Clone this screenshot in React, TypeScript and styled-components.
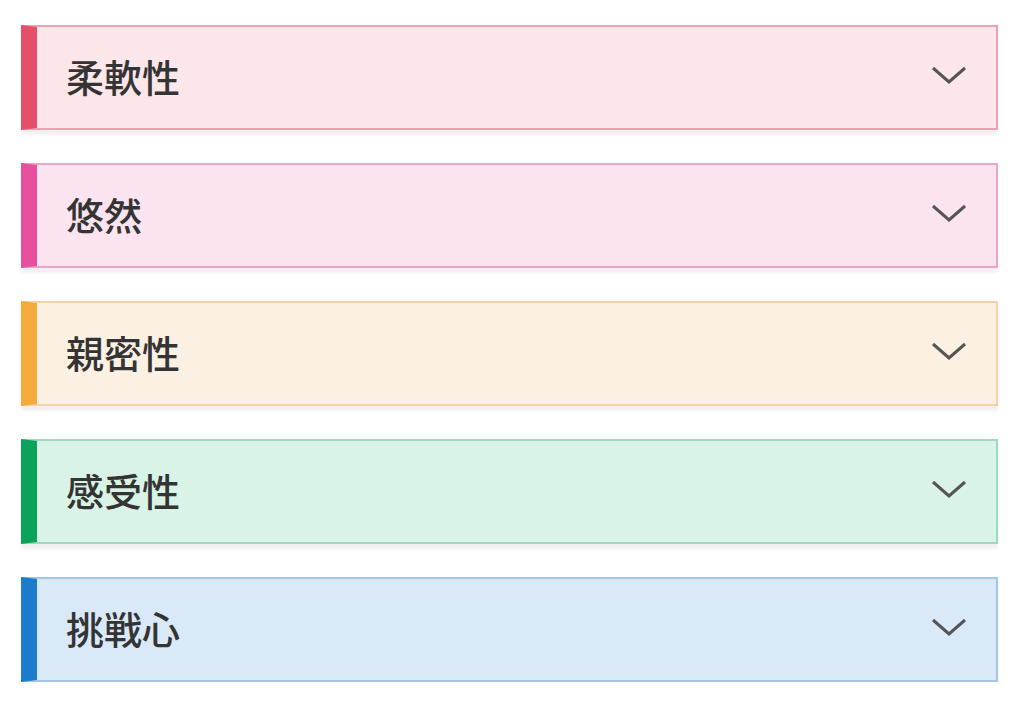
import styled, { createGlobalStyle } from "styled-components";

const GlobalStyle = createGlobalStyle`
    body {
        margin: 0;
        background: #ffffff;
        font-family: "Noto Sans CJK JP", "Noto Sans", sans-serif;
    }
`;

const List = styled.div`
    display: flex;
    flex-direction: column;
    gap: 33px;
    padding: 25px 26px 0 21px;
`;

const Item = styled.div<{ $bar: string; $bg: string; $line: string }>`
    align-items: center;
    background: ${(p) => p.$bg};
    border: 2px solid ${(p) => p.$line};
    border-left: 16px solid ${(p) => p.$bar};
    box-shadow: 0 5px 3px rgba(0, 0, 0, 0.06);
    box-sizing: border-box;
    display: flex;
    height: 105px;
    justify-content: space-between;
    padding: 0 29px 0 29px;
`;

const Title = styled.span`
    color: #343434;
    font-size: 38px;
    font-weight: 500;
    line-height: 1;
    margin-top: -4px;
`;

const Chevron = styled.svg`
    height: 20px;
    width: 36px;
    margin-top: -6px;
`;

const items = [
    { label: "柔軟性", bar: "#e4506c", bg: "#fde6ea", line: "#eba3b3" },
    { label: "悠然", bar: "#e6509c", bg: "#fbe4f0", line: "#e9a6cb" },
    { label: "親密性", bar: "#f5aa3c", bg: "#fcf0e3", line: "#f6d3a6" },
    { label: "感受性", bar: "#0ba25c", bg: "#d9f4e6", line: "#9fd9bb" },
    { label: "挑戦心", bar: "#1c7cc9", bg: "#d9e9f8", line: "#a4c6e5" },
];

function App() {
    return (
        <>
            <GlobalStyle />
            <List>
                {items.map((it) => (
                    <Item key={it.label} $bar={it.bar} $bg={it.bg} $line={it.line}>
                        <Title>{it.label}</Title>
                        <Chevron viewBox="0 0 36 20">
                            <path d="M2 3 L18 17 L34 3" fill="none" stroke="#555555" strokeWidth="3" />
                        </Chevron>
                    </Item>
                ))}
            </List>
        </>
    );
}

export default App;
